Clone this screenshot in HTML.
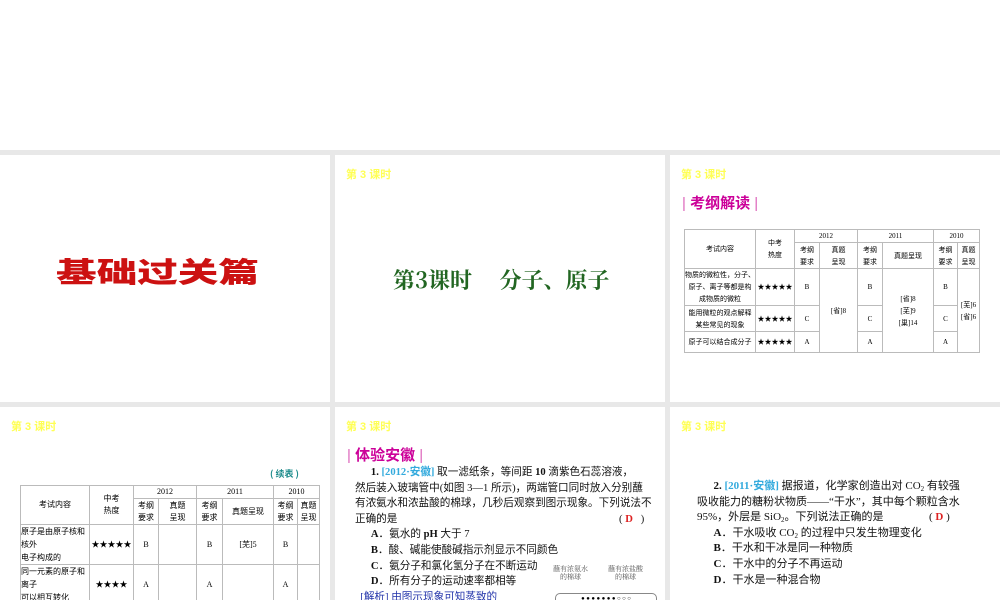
<!DOCTYPE html>
<html><head><meta charset="utf-8"><style>
body{margin:0;width:1000px;height:600px;overflow:hidden;background:#fff;font-family:"Liberation Serif","Noto Serif CJK SC","Noto Sans CJK SC",serif;}
.bg{position:absolute;left:0;top:150px;width:1000px;height:450px;background:#e8e8e8;}
.s{position:absolute;background:#fff;overflow:hidden;}
.tag{position:absolute;left:11px;top:11px;font:bold 11px "Liberation Sans","Noto Sans CJK SC",sans-serif;color:#ffff55;}
.hd{position:absolute;font:bold 15px "Liberation Sans","Noto Sans CJK SC",sans-serif;color:#cc0099;}
.hd i{font-style:normal;font-weight:normal;color:#dd66bb;}
table{position:absolute;border-collapse:collapse;font-size:7.5px;font-family:"Liberation Serif","Noto Sans CJK SC",serif;}
td{border:1px solid #bbb;text-align:center;padding:0;line-height:12px;white-space:nowrap;}
.q{position:absolute;font-size:10.6px;line-height:15.6px;color:#111;white-space:nowrap;font-family:"Liberation Serif","Noto Sans CJK SC",serif;}
.b{color:#33aadd;font-weight:bold}
.r{color:#dd2222;font-weight:bold}
sub{font-size:7px;line-height:0;vertical-align:-2px}
</style></head><body>
<div class="bg"></div>
<div class="s" style="left:0;top:155px;width:330px;height:247px;">
<div style="position:absolute;left:56px;top:96px;font:900 28px 'Noto Sans CJK SC',sans-serif;color:#cc1111;transform:scaleX(1.45);transform-origin:left top;white-space:nowrap;">基础过关篇</div>
</div>
<div class="s" style="left:335px;top:155px;width:330px;height:247px;">
<div class="tag">第 3 课时</div>
<div style="position:absolute;left:58px;top:109px;font:bold 22px 'Noto Serif CJK SC',serif;color:#226622;white-space:nowrap;">第3课时　 分子、原子</div>
</div>
<div class="s" style="left:670px;top:155px;width:330px;height:247px;">
<div class="tag">第 3 课时</div>
<div class="hd" style="left:12px;top:37px;"><i>|</i> 考纲解读 <i>|</i></div>
<table style="left:14px;top:74px;width:296px;font-size:7px;">
<tr><td rowspan="2" style="width:70px">考试内容</td><td rowspan="2" style="width:38px">中考<br>热度</td><td colspan="2">2012</td><td colspan="2">2011</td><td colspan="2">2010</td></tr>
<tr style="height:26px"><td style="width:24px">考纲<br>要求</td><td style="width:37px">真题<br>呈现</td><td style="width:24px">考纲<br>要求</td><td style="width:50px">真题呈现</td><td style="width:23px">考纲<br>要求</td><td>真题<br>呈现</td></tr>
<tr style="height:37px"><td>物质的微粒性，分子、<br>原子、离子等都是构<br>成物质的微粒</td><td>★★★★★</td><td>B</td><td rowspan="3">[省]8</td><td>B</td><td rowspan="3">[省]8<br>[芜]9<br>[巢]14</td><td>B</td><td rowspan="3">[芜]6<br>[省]6</td></tr>
<tr style="height:26px"><td>能用微粒的观点解释<br>某些常见的现象</td><td>★★★★★</td><td>C</td><td>C</td><td>C</td></tr>
<tr style="height:21px"><td>原子可以结合成分子</td><td>★★★★★</td><td>A</td><td>A</td><td>A</td></tr>
</table>
</div>
<div class="s" style="left:0;top:407px;width:330px;height:193px;">
<div class="tag">第 3 课时</div>
<div style="position:absolute;left:270px;top:60px;font:bold 9px 'Noto Sans CJK SC',sans-serif;color:#1a8a8a;">( 续表 )</div>
<table style="left:20px;top:78px;width:300px;font-size:8px;">
<tr><td rowspan="2" style="width:68px">考试内容</td><td rowspan="2" style="width:43px">中考<br>热度</td><td colspan="2">2012</td><td colspan="2">2011</td><td colspan="2">2010</td></tr>
<tr style="height:26px"><td style="width:24px">考纲<br>要求</td><td style="width:37px">真题<br>呈现</td><td style="width:25px">考纲<br>要求</td><td style="width:50px">真题呈现</td><td style="width:23px">考纲<br>要求</td><td>真题<br>呈现</td></tr>
<tr style="height:40px"><td style="text-align:left;line-height:13px">原子是由原子核和<br>核外<br>电子构成的</td><td>★★★★★</td><td>B</td><td></td><td>B</td><td>[芜]5</td><td>B</td><td></td></tr>
<tr style="height:40px"><td style="text-align:left;line-height:13px">同一元素的原子和<br>离子<br>可以相互转化</td><td>★★★★</td><td>A</td><td></td><td>A</td><td></td><td>A</td><td></td></tr>
</table>
</div>
<div class="s" style="left:335px;top:407px;width:330px;height:193px;">
<div class="tag">第 3 课时</div>
<div class="hd" style="left:12px;top:37px;"><i>|</i> 体验安徽 <i>|</i></div>
<div class="q" style="left:20px;top:58px;">
<div>&emsp;&ensp;<b>1.</b> <span class="b">[2012·安徽]</span> 取一滤纸条，等间距 <b>10</b> 滴紫色石蕊溶液，</div>
<div>然后装入玻璃管中(如图 3—1 所示)，两端管口同时放入分别蘸</div>
<div>有浓氨水和浓盐酸的棉球，几秒后观察到图示现象。下列说法不</div>
<div>正确的是<span style="position:absolute;left:264px">( <span class="r">D</span> &ensp;)</span></div>
<div>&emsp;&ensp;<b>A</b>．氨水的 <b>pH</b> 大于 7</div>
<div>&emsp;&ensp;<b>B</b>．酸、碱能使酸碱指示剂显示不同颜色</div>
<div>&emsp;&ensp;<b>C</b>．氨分子和氯化氢分子在不断运动</div>
<div>&emsp;&ensp;<b>D</b>．所有分子的运动速率都相等</div>
<div style="color:#2233aa">&ensp;[解析] 由图示现象可知蒸致的</div></div>
<div style="position:absolute;left:218px;top:158px;font-size:7px;color:#555;line-height:8px;text-align:center;">蘸有浓氨水<br>的棉球</div>
<div style="position:absolute;left:273px;top:158px;font-size:7px;color:#555;line-height:8px;text-align:center;">蘸有浓盐酸<br>的棉球</div>
<div style="position:absolute;left:220px;top:186px;width:100px;height:10px;border:1px solid #888;border-radius:5px;font-size:6px;line-height:10px;text-align:center;">● ● ● ● ● ● ● ○ ○ ○</div>
</div>
<div class="s" style="left:670px;top:407px;width:330px;height:193px;">
<div class="tag">第 3 课时</div>
<div class="q" style="left:27px;top:72px;font-size:11px;">
<div>&emsp;&ensp;<b>2.</b> <span class="b">[2011·安徽]</span> 据报道，化学家创造出对 CO<sub>2</sub> 有较强</div>
<div>吸收能力的糖粉状物质——“干水”，其中每个颗粒含水</div>
<div>95%，外层是 SiO<sub>2</sub>。下列说法正确的是<span style="position:absolute;left:232px">( <span class="r">D</span> )</span></div>
<div>&emsp;&ensp;<b>A</b>．干水吸收 CO<sub>2</sub> 的过程中只发生物理变化</div>
<div>&emsp;&ensp;<b>B</b>．干水和干冰是同一种物质</div>
<div>&emsp;&ensp;<b>C</b>．干水中的分子不再运动</div>
<div>&emsp;&ensp;<b>D</b>．干水是一种混合物</div></div>
</div>
</body></html>
